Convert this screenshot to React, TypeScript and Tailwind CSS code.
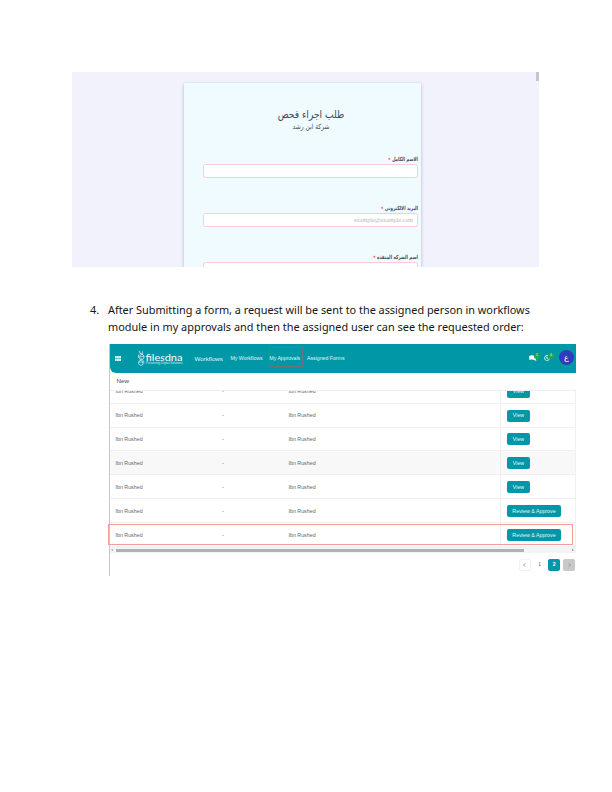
import React from "react";

const Field = ({ label, placeholder, className }: { label: string; placeholder?: string; className: string }) => (
  <div className={className}>
    <div className="mr-[1px] h-[9px] origin-right scale-x-[.73] whitespace-nowrap text-[5.6px] font-bold leading-[9px] text-[#454c5c]">
      {label} <span className="relative top-[1px] text-[6px] leading-none text-[#ff4a4a]">*</span>
    </div>
    <div
      dir="ltr"
      className="mr-[1px] h-[14px] rounded-[2.5px] border border-[#f9cdd1] bg-white pr-1 text-right font-['Liberation_Serif',serif] text-[6.1px] leading-[12px] text-[#b8b8b8]"
    >
      {placeholder}
    </div>
  </div>
);

const RequestForm = () => (
  <div className="relative ml-[72px] h-[195px] w-[467px] overflow-hidden bg-[#f2f2fd] pt-[11px]">
    <div className="absolute right-0 top-0 h-[9px] w-[3px] bg-[#c5c5cf]" />
    <div
      dir="rtl"
      className="ml-[112px] h-[220px] w-[237px] bg-[#effbff] pl-[19px] pr-[2px] font-['DejaVu_Sans',sans-serif] shadow-[0_1px_3px_#aab0c4]"
    >
      <div className="h-[72px] pt-[25px] text-center text-[#414858]">
        <div className="h-[14px] scale-x-[.84] text-[10.9px] leading-[14px]">طلب اجراء فحص</div>
        <div className="h-[9px] scale-x-[.84] text-[7.1px] leading-[9px]">شركة ابن رشد</div>
      </div>
      <Field className="h-[49px]" label="الاسم الكامل" />
      <Field className="h-[49px]" label="البريد الالكتروني" placeholder="example@example.com" />
      <Field className="h-[49px]" label="اسم الشركة المنفذة" />
    </div>
  </div>
);

const Logo = () => (
  <svg className="ml-[16px] h-[17px] w-[48px] shrink-0 overflow-visible" viewBox="0 0 48 17" fill="none" stroke="#e4f6f8" strokeLinecap="round">
    <path d="M2 1.2C2 4 7.2 4 7.2 7S1.500 9.500 1.500 12.500s3 3.200 4 2.200c1.400-1.500-.5-3.700-2-5C1.500 8 .7 6.500 1.800 4.900" strokeWidth=".8" />
    <path d="M5.500 1.500C7 4 2.500 5.500 2.500 7s5 2.500 4.500 6M3 4h2.500M3.300 6.500h3M2.500 12h3.500" strokeWidth=".6" />
    <text x="8.500" y="10.500" fontSize="10" textLength="37" lengthAdjust="spacingAndGlyphs" fill="#fff" stroke="none" fontFamily="Lato, sans-serif">
      file<tspan fontStyle="italic">s</tspan>dna
    </text>
    <text x="9" y="14.300" fontSize="3.300" textLength="36.5" lengthAdjust="spacingAndGlyphs" fill="#d5eff1" stroke="none" fontFamily="Liberation Sans, sans-serif">Preserving Digital Solutions</text>
  </svg>
);

const Header = () => (
  <div className="relative flex h-[29px] shrink-0 items-center rounded-bl-[6px] bg-[#0097a7] text-[5.2px] text-[#e4f6f7]">
    <svg className="-mt-[1px] ml-[5px] h-[5px] w-[6px] shrink-0" viewBox="0 0 6 5" fill="#f2ffff">
      <path d="M0 0h1.700v2.200H0zM2.100 0h1.700v2.200H2.100zM4.200 0H6v2.200H4.200zM0 2.700h1.700V5H0zM2.100 2.700h1.700V5H2.100zM4.200 2.700H6V5H4.200z" />
    </svg>
    <Logo />
    <span className="ml-[9.5px] w-[36px] whitespace-nowrap text-[6.2px]">Workflows</span>
    <span className="w-[38px] whitespace-nowrap">My Workflows</span>
    <span className="-mt-[3px] flex h-[20px] w-[34px] shrink-0 items-center whitespace-nowrap border border-[#687580] pt-[3px] text-[5.1px]">My Approvals</span>
    <span className="ml-[4.5px] whitespace-nowrap text-[5.2px]">Assigned Forms</span>
    <div className="absolute right-[21px] top-[6px] flex items-center">
      <div className="relative mr-[7px] h-[14px] w-[10px]">
        <svg className="absolute -left-[1px] top-[5px] h-[6px] w-[8px]" viewBox="0 0 8 6" fill="white">
          <ellipse cx="2.800" cy="2.300" rx="2.800" ry="2" />
          <path d="M.8 3 0 5l2.600-.8zM5.800 2c2 0 2.200 2 .9 2.600L7.500 6 5 5c-1 .1-2-.2-2.300-.6C5 4.500 6 3.500 5.800 2z" />
        </svg>
        <b className="absolute right-0 top-[3px] flex h-[6px] w-[6px] items-center justify-center rounded-full bg-[#28a745] text-[3.5px] font-normal">1</b>
      </div>
      <div className="relative h-[14px] w-[8px]">
        <svg className="absolute -left-[3px] top-[5px] h-[6px] w-[6px]" viewBox="0 0 6 6" fill="none" stroke="white">
          <path d="M4 .7A2.500 2.500 0 1 0 5.500 3.500M2.800 1.700v1.600h1.500" strokeWidth=".8" />
        </svg>
        <b className="absolute right-[1px] top-[3px] flex h-[6px] w-[6px] items-center justify-center rounded-full bg-[#28a745] text-[3.5px] font-normal">4</b>
      </div>
    </div>
    <div className="absolute right-[2px] top-[6px] flex h-[15px] w-[15px] items-center justify-center rounded-full bg-[#303bbd] font-['DejaVu_Sans',sans-serif] text-[8px] leading-none text-white">ع</div>
  </div>
);

const Row = ({ action, hover }: { action: string; hover?: boolean }) => (
  <div className={`flex h-[23.9px] shrink-0 items-center border-b border-[#f0f0f0] text-[5.3px] text-[#666] ${hover ? "bg-[#f8f8f8]" : "bg-white"}`}>
    <span className="w-[106px] pl-[5.500px] pt-[2px]">Ibn Rushed</span>
    <span className="w-[67px] pl-[6px] pt-[2px]">-</span>
    <span className="w-[217px] pl-[5.500px] pt-[2px]">Ibn Rushed</span>
    <div className="flex h-full w-[76px] items-center border-l border-r border-[#f0f0f0] pl-[6px] pt-[1px]">
      <span className={`flex h-[12px] items-center justify-center whitespace-nowrap rounded-[2px] bg-[#0097a7] pt-[1px] text-[#e5f7f8] ${action === "View" ? "w-[23px]" : "w-[54px]"}`}>{action}</span>
    </div>
  </div>
);

const Approvals = () => (
  <div className="relative ml-[109px] mt-[10px] flex h-[232px] w-[467px] flex-col overflow-hidden border-l border-[#c8c8c8] bg-white font-['Liberation_Sans',Arial,sans-serif]">
    <Header />
    <div className="h-[18px] shrink-0 border-b border-[#eee] pl-[6.5px] text-[6.2px] leading-[15px] text-[#464c56]">New</div>
    <div className="flex h-[156px] shrink-0 flex-col justify-end overflow-hidden">
      {["View", "View", "View", "View", "View", "Review & Approve", "Review & Approve"].map((action, i) => (
        <Row key={i} action={action} hover={i === 3} />
      ))}
    </div>
    <div className="flex h-[6px] shrink-0 items-center bg-[#f4f4f4]">
      <span className="ml-[1px] border-y-[1.5px] border-r-2 border-y-transparent border-r-[#999]" />
      <span className="ml-[3px] h-[3px] w-[408px] bg-[#b1b1b1]" />
      <span className="ml-auto mr-[2px] border-y-[1.5px] border-l-2 border-y-transparent border-l-[#888]" />
    </div>
    <div className="mr-[1px] mt-[6px] flex h-[12px] shrink-0 justify-end gap-[2.700px] text-[5.200px] text-[#666]">
      <span className="flex w-[12px] items-center justify-center rounded-[2px] border border-[#f2f2f2]">
        <svg className="h-[4px] w-[3px]" viewBox="0 0 3 4" fill="none" stroke="#777" strokeWidth=".7"><path d="M2.500.3.500 2l2 1.700" /></svg>
      </span>
      <span className="flex w-[12px] items-center justify-center">1</span>
      <span className="flex w-[12px] items-center justify-center rounded-[2px] bg-[#0097a7] font-bold text-white">2</span>
      <span className="flex w-[12px] items-center justify-center rounded-[2px] bg-[#c8c8c8]">
        <svg className="h-[4px] w-[3px]" viewBox="0 0 3 4" fill="none" stroke="#888" strokeWidth=".7"><path d="m.5.300 2 1.700-2 1.700" /></svg>
      </span>
    </div>
  </div>
);

export default function App() {
  return (
    <main className="relative h-[792px] w-[612px] overflow-hidden bg-white pt-[72px]">
      <RequestForm />
      <div className="ml-[90px] mt-[34px] flex h-[33px] font-['Noto_Sans',sans-serif] text-[10.9px] leading-[17px] text-[#151515]">
        <span className="w-[18px] shrink-0">4.</span>
        <div className="whitespace-nowrap">
          <div className="tracking-[-0.015px]">After Submitting a form, a request will be sent to the assigned person in workflows</div>
          <div className="tracking-[0.015px]">module in my approvals and then the assigned user can see the requested order:</div>
        </div>
      </div>
      <Approvals />
      <div className="absolute left-[108px] top-[524px] h-[21px] w-[465px] border border-[#f49b9b]" />
    </main>
  );
}
